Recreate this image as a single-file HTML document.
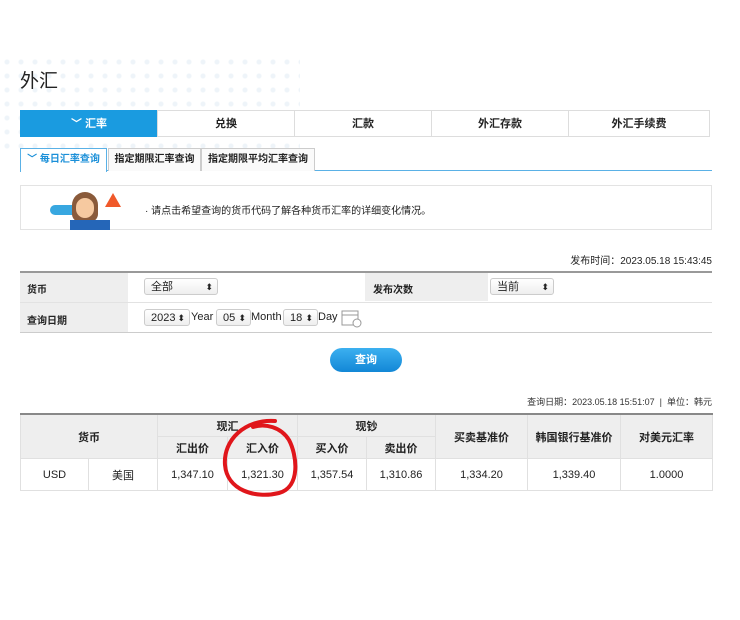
<!DOCTYPE html><html><head><meta charset="utf-8"><style>
body{margin:0;width:740px;height:620px;background:#fff;font-family:"Liberation Sans","Noto Sans CJK SC",sans-serif;position:relative;overflow:hidden;color:#222}
.a{position:absolute}
.tab{position:absolute;top:110px;height:27px;line-height:27px;text-align:center;font-size:11px;font-weight:bold;border:1px solid #ddd;box-sizing:border-box;background:#fff}
.st{position:absolute;top:148px;height:23px;line-height:21px;font-size:10px;font-weight:bold;border:1px solid #ccc;border-bottom:none;box-sizing:border-box;text-align:center;background:#fafafa;white-space:nowrap}
.sel{position:absolute;height:17px;border:1px solid #ccc;border-radius:3px;background:linear-gradient(#fff,#eee);font-size:11px;line-height:17px;padding-left:6px;box-sizing:border-box}
.sel:after{content:"⬍";position:absolute;right:4px;font-size:9px}
table{position:absolute;left:20px;top:413px;width:692px;border-collapse:collapse;font-size:11px;table-layout:fixed}
td,th{border:1px solid #e0e0e0;text-align:center;padding:0}
th{background:#eee;font-weight:bold;height:21px}
tr:first-child th{border-top:2px solid #888}
</style></head><body>
<div class="a" style="left:0;top:55px;width:300px;height:100px;background:radial-gradient(circle,#eef4f9 2px,transparent 3px) 0 0/14px 14px"></div>
<div class="a" style="left:20px;top:66px;font-size:19px">外汇</div>
<div class="tab" style="left:20px;width:138px;background:#1a9be0;color:#fff;border-color:#1a9be0">﹀ 汇率</div>
<div class="tab" style="left:157px;width:138px">兑换</div>
<div class="tab" style="left:294px;width:138px">汇款</div>
<div class="tab" style="left:431px;width:138px">外汇存款</div>
<div class="tab" style="left:568px;width:142px">外汇手续费</div>
<div class="a" style="left:20px;top:170px;width:692px;height:1px;background:#5ab1e6"></div>
<div class="st" style="left:20px;width:87px;color:#1a8fd8;background:#fff;border-color:#5ab1e6;height:24px">﹀ 每日汇率查询</div>
<div class="st" style="left:108px;width:93px">指定期限汇率查询</div>
<div class="st" style="left:201px;width:114px">指定期限平均汇率查询</div>
<div class="a" style="left:20px;top:185px;width:692px;height:45px;border:1px solid #e3e3e3;box-sizing:border-box"></div>
<div class="a" style="left:50px;top:205px;width:28px;height:10px;background:#38a7e0;border-radius:5px"></div>
<div class="a" style="left:72px;top:192px;width:26px;height:30px;background:#8a5a3a;border-radius:13px 13px 8px 8px"></div>
<div class="a" style="left:76px;top:198px;width:18px;height:20px;background:#f6c9a0;border-radius:9px"></div>
<div class="a" style="left:70px;top:220px;width:40px;height:10px;background:#2566b8"></div>
<div class="a" style="left:105px;top:193px;width:0;height:0;border-left:8px solid transparent;border-right:8px solid transparent;border-bottom:14px solid #f0592a"></div>
<div class="a" style="left:145px;top:202px;font-size:10px">· 请点击希望查询的货币代码了解各种货币汇率的详细变化情况。</div>
<div class="a" style="right:28px;top:252px;font-size:10px">发布时间：2023.05.18 15:43:45</div>
<div class="a" style="left:20px;top:271px;width:692px;height:62px;border-top:2px solid #999;border-bottom:1px solid #ccc;box-sizing:border-box"></div>
<div class="a" style="left:20px;top:273px;width:108px;height:59px;background:#eee"></div>
<div class="a" style="left:365px;top:273px;width:123px;height:28px;background:#eee"></div>
<div class="a" style="left:20px;top:302px;width:692px;height:1px;background:#e2e2e2"></div>
<div class="a" style="left:27px;top:281px;font-size:10px;font-weight:bold">货币</div>
<div class="a" style="left:27px;top:312px;font-size:10px;font-weight:bold">查询日期</div>
<div class="a" style="left:373px;top:281px;font-size:10px;font-weight:bold">发布次数</div>
<div class="sel" style="left:144px;top:278px;width:74px">全部</div>
<div class="sel" style="left:490px;top:278px;width:64px">当前</div>
<div class="sel" style="left:144px;top:309px;width:46px">2023</div>
<div class="a" style="left:191px;top:311px;font-size:11px">Year</div>
<div class="sel" style="left:216px;top:309px;width:35px">05</div>
<div class="a" style="left:251px;top:311px;font-size:11px">Month</div>
<div class="sel" style="left:283px;top:309px;width:35px">18</div>
<div class="a" style="left:318px;top:311px;font-size:11px">Day</div>
<svg class="a" style="left:341px;top:308px" width="22" height="20"><rect x="1" y="3" width="16" height="14" fill="none" stroke="#999"/><line x1="1" y1="7" x2="17" y2="7" stroke="#999"/><circle cx="16" cy="15" r="4" fill="#fff" stroke="#999"/></svg>
<div class="a" style="left:330px;top:348px;width:72px;height:24px;border-radius:12px;background:linear-gradient(#3cb0f0,#1287d6);color:#fff;font-size:11px;font-weight:bold;text-align:center;line-height:24px">查询</div>
<div class="a" style="right:28px;top:395px;font-size:9px;color:#333">查询日期：2023.05.18 15:51:07 &nbsp;|&nbsp; 单位：韩元</div>
<table>
<colgroup><col style="width:68px"><col style="width:69px"><col style="width:70px"><col style="width:70px"><col style="width:69px"><col style="width:69px"><col style="width:92px"><col style="width:93px"><col style="width:92px"></colgroup>
<tr><th colspan="2" rowspan="2">货币</th><th colspan="2">现汇</th><th colspan="2">现钞</th><th rowspan="2">买卖基准价</th><th rowspan="2">韩国银行基准价</th><th rowspan="2">对美元汇率</th></tr>
<tr><th>汇出价</th><th>汇入价</th><th>买入价</th><th>卖出价</th></tr>
<tr style="height:32px"><td>USD</td><td>美国</td><td>1,347.10</td><td>1,321.30</td><td>1,357.54</td><td>1,310.86</td><td>1,334.20</td><td>1,339.40</td><td>1.0000</td></tr>
</table>
<svg class="a" style="left:205px;top:415px" width="110" height="90"><path d="M70 6 C40 4 18 25 20 50 C22 75 50 84 74 78 C96 72 92 40 84 25 C76 12 60 8 48 12" fill="none" stroke="#e0161b" stroke-width="4" stroke-linecap="round"/></svg>
</body></html>
